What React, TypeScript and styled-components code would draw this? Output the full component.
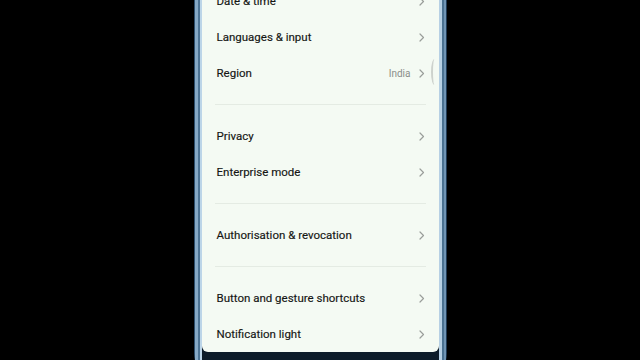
import styled, { createGlobalStyle } from 'styled-components'

const GlobalStyle = createGlobalStyle`
  html, body {
    margin: 0;
    padding: 0;
    background: #000;
    overflow: hidden;
  }
  body {
    width: 640px;
    height: 360px;
    font-family: Roboto, "Noto Sans", "Liberation Sans", sans-serif;
  }
`

type Item = { label: string; value?: string }

const sections: Item[][] = [
  [{ label: 'Date & time' }, { label: 'Languages & input' }, { label: 'Region', value: 'India' }],
  [{ label: 'Privacy' }, { label: 'Enterprise mode' }],
  [{ label: 'Authorisation & revocation' }],
  [{ label: 'Button and gesture shortcuts' }, { label: 'Notification light' }],
]

export default function App() {
  return (
    <>
      <GlobalStyle />
      <Stage>
        <PhoneFrame>
          <Bezel>
            <Screen>
              <EdgeHandle />
              {sections.map((items, i) => (
                <Section key={i}>
                  {i > 0 && <Divider />}
                  {items.map((item) => (
                    <Row key={item.label}>
                      <Label>{item.label}</Label>
                      <Trailing>
                        {item.value && <Value>{item.value}</Value>}
                        <Chevron />
                      </Trailing>
                    </Row>
                  ))}
                </Section>
              ))}
            </Screen>
          </Bezel>
        </PhoneFrame>
      </Stage>
    </>
  )
}

function Chevron() {
  return (
    <svg width="6" height="9" viewBox="0 0 6 9" fill="none">
      <polyline points="1,1 4.5,4.5 1,8" stroke="#9a9e9a" strokeWidth="1.2" strokeLinecap="round" strokeLinejoin="round" />
    </svg>
  )
}

const Stage = styled.div`
  width: 640px;
  height: 360px;
  overflow: hidden;
  display: flex;
  justify-content: center;
`

const PhoneFrame = styled.div`
  width: 253px;
  height: 400px;
  margin-top: -17px;
  padding: 0 8px 0 8px;
  box-sizing: border-box;
  border-radius: 0 0 30px 30px;
  background:
    linear-gradient(90deg, #2c4d6b 0 1px, #86a9c6 1px 4px, #4c7394 4px 6px, #bcd5e8 6px 8px, transparent 8px),
    linear-gradient(270deg, #1f3a55 0 1px, #6f94b4 1px 3px, #4a7191 3px 5px, #b7d0e4 5px 8px, transparent 8px),
    #0c1b29;
`

const Bezel = styled.div`
  height: 100%;
  background: #0c1b29;
  border-radius: 0 0 24px 24px;
`

const Screen = styled.div`
  position: relative;
  height: 369px;
  background: #f4faf3;
  border-radius: 0 0 6px 6px;
  overflow: hidden;
`

const EdgeHandle = styled.div`
  position: absolute;
  right: 1px;
  top: 76px;
  width: 5px;
  height: 26px;
  border-left: 2.5px solid #cdd2cd;
  border-radius: 50% 0 0 50%;
`

const Section = styled.div`
  display: flex;
  flex-direction: column;
`

const Divider = styled.div`
  height: 1px;
  margin: 13px;
  background: #e4ebe3;
`

const Row = styled.div`
  height: 36px;
  display: flex;
  align-items: center;
  justify-content: space-between;
  padding: 0 14px 0 15px;
`

const Label = styled.span`
  font-size: 11.5px;
  color: #141614;
  -webkit-text-stroke: 0.15px #141614;
`

const Trailing = styled.div`
  display: flex;
  align-items: center;
  gap: 8px;
`

const Value = styled.span`
  font-size: 10px;
  color: #8a8e8a;
`
